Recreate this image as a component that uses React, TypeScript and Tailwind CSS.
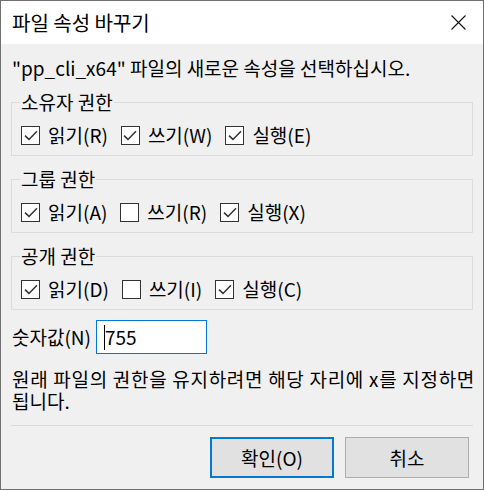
import { ReactNode } from 'react';

type Perm = { label: string; checked: boolean };

const groups: { title: string; items: Perm[] }[] = [
    {
        title: '소유자 권한',
        items: [
            { label: '읽기(R)', checked: true },
            { label: '쓰기(W)', checked: true },
            { label: '실행(E)', checked: true },
        ],
    },
    {
        title: '그룹 권한',
        items: [
            { label: '읽기(A)', checked: true },
            { label: '쓰기(R)', checked: false },
            { label: '실행(X)', checked: true },
        ],
    },
    {
        title: '공개 권한',
        items: [
            { label: '읽기(D)', checked: true },
            { label: '쓰기(I)', checked: false },
            { label: '실행(C)', checked: true },
        ],
    },
];

const CheckBox = ({ checked }: { checked: boolean }) => (
    <span className="w-[19px] h-[19px] border border-[#333333] bg-white flex items-center justify-center shrink-0">
        {checked && (
            <svg width="14" height="11" viewBox="0 0 14 11" fill="none">
                <path d="M1 5.6 L5 9.4 L13 1.2" stroke="#333333" strokeWidth="1.5" />
            </svg>
        )}
    </span>
);

const Group = ({ title, children }: { title: string; children: ReactNode }) => (
    <fieldset className="mt-[12px] border border-[#dcdcdc] px-[9px] pb-[9px]">
        <legend className="px-[1px] -ml-[1px] leading-[22px]">{title}</legend>
        {children}
    </fieldset>
);

export default function App() {
    return (
        <div className="w-[484px] h-[490px] border border-[#707070] bg-[#f0f0f0] flex flex-col text-[19px] text-black font-['Noto_Sans_CJK_KR',sans-serif]">
            <div className="h-[43px] bg-white flex items-center justify-between pl-[11px] pr-[17px]">
                <span className="leading-[22px] text-[20px]">파일 속성 바꾸기</span>
                <svg width="15" height="15" viewBox="0 0 15 15">
                    <path d="M0.5 0.5 L14.5 14.5 M14.5 0.5 L0.5 14.5" stroke="#111111" strokeWidth="1.1" />
                </svg>
            </div>

            <div className="px-[10px] flex flex-col">
                <p className="mt-[13px] pl-[1px] leading-[22px] whitespace-nowrap">"pp_cli_x64" 파일의 새로운 속성을 선택하십시오.</p>

                {groups.map((g) => (
                    <Group key={g.title} title={g.title}>
                        <div className="mt-[11px] flex items-center gap-[13px] h-[22px]">
                            {g.items.map((it) => (
                                <label key={it.label} className="flex items-center gap-[8px]">
                                    <CheckBox checked={it.checked} />
                                    <span className="leading-[22px]">{it.label}</span>
                                </label>
                            ))}
                        </div>
                    </Group>
                ))}

                <div className="mt-[10px] flex items-center gap-[5px] pl-[1px]">
                    <span className="leading-[22px]">숫자값(N)</span>
                    <div className="w-[111px] h-[34px] border border-[#0078d7] bg-white flex items-center pl-[7px]">
                        <span className="w-px h-[25px] bg-black" />
                        <span className="leading-[22px]">755</span>
                    </div>
                </div>

                <p className="mt-[14px] pl-[1px] leading-[22px] whitespace-nowrap">
                    <span className="tracking-[0.7px]">원래 파일의 권한을 유지하려면 해당 자리에 x를 지정하면</span>
                    <br />
                    됩니다.
                </p>

                <div className="mt-[13px] h-px bg-[#dadada]" />

                <div className="mt-[11px] flex justify-end gap-[11px] pr-[4px]">
                    <button className="w-[124px] h-[41px] border-2 border-[#0078d7] bg-[#e1e1e1] leading-[22px]">
                        확인(O)
                    </button>
                    <button className="w-[124px] h-[41px] border border-[#adadad] bg-[#e1e1e1] leading-[22px]">
                        취소
                    </button>
                </div>
            </div>
        </div>
    );
}
